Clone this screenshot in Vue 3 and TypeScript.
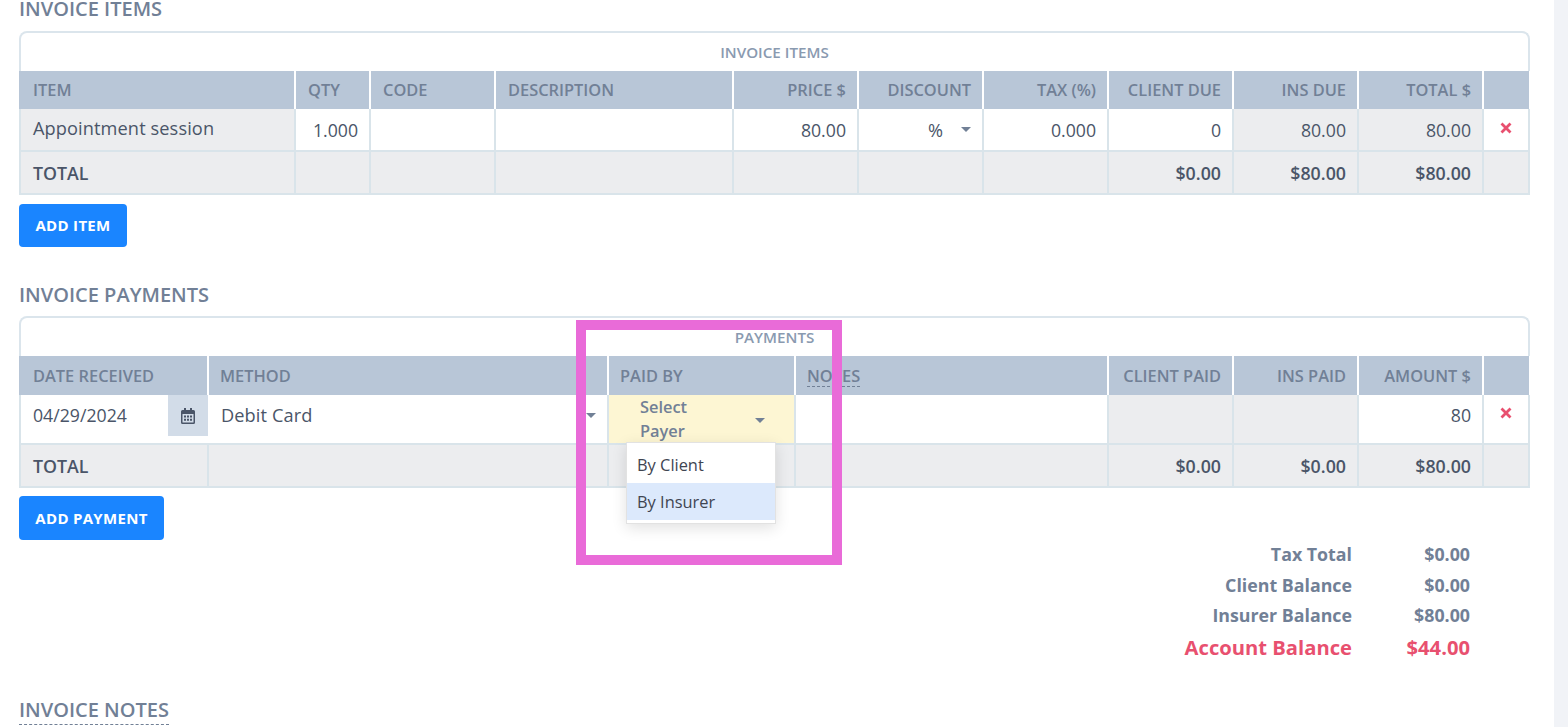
<script setup lang="ts">
interface Col { label: string; right?: boolean; dashed?: boolean }
const itemCols: Col[] = [
  { label: 'ITEM' }, { label: 'QTY' }, { label: 'CODE' }, { label: 'DESCRIPTION' },
  { label: 'PRICE $', right: true }, { label: 'DISCOUNT', right: true }, { label: 'TAX (%)', right: true },
  { label: 'CLIENT DUE', right: true }, { label: 'INS DUE', right: true }, { label: 'TOTAL $', right: true }, { label: '' },
]
const payCols: Col[] = [
  { label: 'DATE RECEIVED' }, { label: 'METHOD' }, { label: 'PAID BY' }, { label: 'NOTES', dashed: true },
  { label: 'CLIENT PAID', right: true }, { label: 'INS PAID', right: true }, { label: 'AMOUNT $', right: true }, { label: '' },
]
const itemTotals = ['TOTAL', '', '', '', '', '', '', '$0.00', '$80.00', '$80.00', '']
const payTotals = ['TOTAL', '', '', '', '$0.00', '$0.00', '$80.00', '']
const summary = [
  { label: 'Tax Total', value: '$0.00' },
  { label: 'Client Balance', value: '$0.00' },
  { label: 'Insurer Balance', value: '$80.00' },
]
</script>

<template>
  <div class="page">
    <h2 class="title first">INVOICE ITEMS</h2>
    <div class="tbl">
      <div class="caption">INVOICE ITEMS</div>
      <div class="row head items">
        <div v-for="(c, i) in itemCols" :key="i" class="cell" :class="{ right: c.right }">{{ c.label }}</div>
      </div>
      <div class="row body items">
        <div class="cell grey first-cell item-name">Appointment session</div>
        <div class="cell right">1.000</div>
        <div class="cell"></div>
        <div class="cell"></div>
        <div class="cell right">80.00</div>
        <div class="cell discount"><span class="pct">%</span><i class="caret"></i></div>
        <div class="cell right">0.000</div>
        <div class="cell right">0</div>
        <div class="cell right grey">80.00</div>
        <div class="cell right grey">80.00</div>
        <div class="cell del last-cell">
          <svg width="12" height="12" viewBox="0 0 12 12"><path d="M1.500 1.500l9 9M10.500 1.500l-9 9" stroke="#e8506f" stroke-width="2.800" fill="none" /></svg>
        </div>
      </div>
      <div class="row total items">
        <div v-for="(t, i) in itemTotals" :key="i" class="cell grey" :class="{ right: i > 0, 'first-cell': i === 0, 'last-cell': i === 10 }">{{ t }}</div>
      </div>
    </div>
    <button class="btn btn-item">ADD ITEM</button>

    <h2 class="title second">INVOICE PAYMENTS</h2>
    <div class="tbl">
      <div class="caption pay-caption">PAYMENTS</div>
      <div class="row head pays">
        <div v-for="(c, i) in payCols" :key="i" class="cell" :class="{ right: c.right }">
          <span :class="{ dashed: c.dashed }">{{ c.label }}</span>
        </div>
      </div>
      <div class="row body pays tall">
        <div class="cell first-cell date-cell">
          <span class="date">04/29/2024</span>
          <span class="addon">
            <svg width="14" height="16" viewBox="0 0 14 16" fill="#4a5568">
              <path d="M3 0h2v2h4V0h2v2h1.500A1.500 1.500 0 0 1 14 3.500V14.500A1.500 1.500 0 0 1 12.500 16h-11A1.500 1.500 0 0 1 0 14.500V3.500A1.500 1.500 0 0 1 1.500 2H3zM1.500 6v8.200c0 .2.100.3.300.3h10.400c.2 0 .3-.1.3-.3V6z" />
              <path d="M3 7.500h2v2H3zM6 7.500h2v2H6zM9 7.500h2v2H9zM3 10.700h2v2H3zM6 10.700h2v2H6zM9 10.700h2v2H9z" />
            </svg>
          </span>
        </div>
        <div class="cell method"><span>Debit Card</span><i class="caret"></i></div>
        <div class="cell payer"><span class="payer-text">Select Payer</span><i class="caret"></i></div>
        <div class="cell"></div>
        <div class="cell grey"></div>
        <div class="cell grey"></div>
        <div class="cell right">80</div>
        <div class="cell del last-cell">
          <svg width="12" height="12" viewBox="0 0 12 12"><path d="M1.500 1.500l9 9M10.500 1.500l-9 9" stroke="#e8506f" stroke-width="2.800" fill="none" /></svg>
        </div>
      </div>
      <div class="row total pays">
        <div v-for="(t, i) in payTotals" :key="i" class="cell grey" :class="{ right: i > 0, 'first-cell': i === 0, 'last-cell': i === 7 }">{{ t }}</div>
      </div>
    </div>
    <button class="btn btn-pay">ADD PAYMENT</button>

    <div class="summary">
      <template v-for="s in summary" :key="s.label">
        <div class="s-label">{{ s.label }}</div>
        <div class="s-value">{{ s.value }}</div>
      </template>
      <div class="s-label balance">Account Balance</div>
      <div class="s-value balance">$44.00</div>
    </div>

    <h2 class="title third"><span class="dashed">INVOICE NOTES</span></h2>

    <div class="menu">
      <div class="opt">By Client</div>
      <div class="opt active">By Insurer</div>
    </div>
    <div class="mark"></div>
    <div class="scroll"></div>
  </div>
</template>

<style scoped>
.page {
  position: relative;
  width: 1568px;
  height: 727px;
  overflow: hidden;
  padding: 0 0 0 19px;
  box-sizing: border-box;
  background: #fff;
  font-family: "Open Sans", sans-serif;
  color: #4a5568;
  font-size: 18px;
}
.title {
  margin: 0;
  font-size: 20px;
  line-height: 24px;
  font-weight: 600;
  color: #718096;
}
.title.first { margin-top: -3px; margin-bottom: 10px; }
.title.second { margin-top: 36px; margin-bottom: 9px; }
.title.third { margin-top: 37px; }
.title .dashed { padding-bottom: 1px; }
.dashed { border-bottom: 1px dashed #718096; }
.tbl { width: 1511px; }
.caption {
  box-sizing: border-box;
  height: 40px;
  border: 2px solid #dbe5ec;
  border-bottom: 0;
  border-radius: 8px 8px 0 0;
  text-align: center;
  font-size: 15.200px;
  font-weight: 600;
  line-height: 38px;
  color: #8a9ab0;
}
.row { display: grid; }
.items { grid-template-columns: 277px 75px 125px 238px 125px 125px 125px 125px 125px 125px 46px; }
.pays { grid-template-columns: 190px 400px 187px 313px 125px 125px 125px 46px; }
.cell {
  box-sizing: border-box;
  display: flex;
  align-items: center;
  padding: 0 11px 0 12px;
  border-right: 2px solid #d9e4ea;
  border-bottom: 2px solid #d9e4ea;
  min-width: 0;
  white-space: nowrap;
}
.cell.right { justify-content: flex-end; }
.cell.grey { background: #ecedef; }
.cell.first-cell { border-left: 2px solid #d9e4ea; padding-left: 12px; }
.cell.last-cell { border-right: 2px solid #d9e4ea; }
.head .cell {
  height: 38px;
  background: #b8c6d7;
  border-right: 2px solid #fff;
  border-bottom: 0;
  font-size: 16.400px;
  font-weight: 600;
  color: #718096;
}
.head.items .cell { padding-bottom: 1px; }
.head.pays .cell { padding-left: 11px; }
.head .cell:first-child { padding-left: 14px; }
.head .cell:last-child { border-right: 1px solid #fff; }
.head.pays .cell { height: 39px; }
.dashed { line-height: 20px; }
.head .dashed { padding-top: 1px; }
.body .cell { height: 43px; font-weight: 500; font-size: 18.200px; letter-spacing: 0.100px; }
.body .cell.right, .date { font-size: 17.700px; font-weight: 500; letter-spacing: 0; }
.body.tall .cell { height: 50px; }
.item-name { padding-bottom: 4px; }
.total .cell { height: 43px; font-weight: 600; font-size: 17.800px; }
.discount { justify-content: space-between; padding: 0 11px 0 69px; }
.pct { padding-top: 1px; }
.caret {
  display: block;
  width: 0;
  height: 0;
  border-left: 5px solid transparent;
  border-right: 5px solid transparent;
  border-top: 5px solid #718096;
}
.cell.del { justify-content: center; padding: 0 0 3px; }
.body.tall .cell.del { padding: 0 0 12px; }
.date-cell { padding-right: 0; border-right: 0; align-items: flex-start; justify-content: space-between; }
.date { line-height: 40px; }
.addon {
  flex: none;
  width: 40px;
  height: 41px;
  margin-right: 1px;
  background: #d2dce8;
  display: flex;
  align-items: center;
  justify-content: center;
}
.body.tall .cell.method { justify-content: space-between; padding-bottom: 8px; padding-right: 11px; }
.body.tall .cell.payer {
  background: #fdf6d3;
  padding: 0 29px 0 31px;
  justify-content: space-between;
  white-space: normal;
}
.payer-text { width: 60px; line-height: 24px; color: #718096; font-weight: 600; font-size: 16.400px; letter-spacing: 0; }
.payer .caret { margin-top: 3px; }
.body.tall .right { padding-bottom: 8px; }
.btn {
  display: block;
  border: 0;
  border-radius: 4px;
  background: #1a85ff;
  color: #fff;
  font-family: inherit;
  font-size: 15px;
  font-weight: 700;
  letter-spacing: 0.300px;
  padding: 0;
}
.btn-item { width: 108px; height: 43px; margin-top: 9px; padding-bottom: 2px; }
.btn-pay { width: 145px; height: 44px; margin-top: 8px; }
.summary {
  display: grid;
  width: 1451px;
  grid-template-columns: 1fr 118px;
  grid-auto-rows: 30.500px;
  margin-top: -1px;
  align-items: center;
  text-align: right;
  font-weight: 700;
  font-size: 17.800px;
  color: #718096;
}
.balance { color: #e8506f; font-size: 20.200px; height: 34px; line-height: 34px; padding-top: 3px; }
.menu {
  position: absolute;
  left: 626px;
  top: 442px;
  width: 150px;
  height: 82px;
  box-sizing: border-box;
  background: #fff;
  border: 1px solid #e2e2e2;
  box-shadow: 0 4px 14px rgba(0, 0, 0, 0.12);
  font-size: 16.400px;
  color: #3f4552;
}
.opt { height: 40px; line-height: 43px; padding-left: 10px; }
.opt.active { height: 37px; line-height: 37px; background: #dce9fc; }
.mark {
  position: absolute;
  left: 576px;
  top: 320px;
  width: 266px;
  height: 245px;
  box-sizing: border-box;
  border: 10px solid #e96bd8;
}
.scroll {
  position: absolute;
  right: 0;
  top: 0;
  width: 14px;
  height: 727px;
  background: #f1f3f7;
}
</style>

<style>
html, body { margin: 0; overflow: hidden; }
</style>
